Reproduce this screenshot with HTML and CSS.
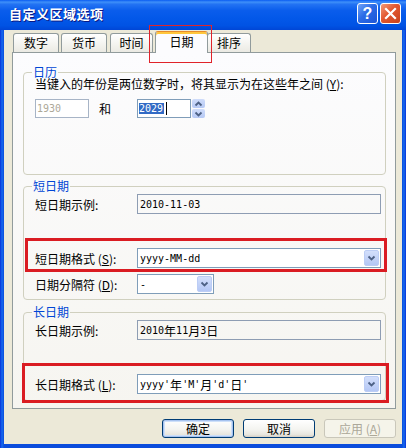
FILE: index.html
```html
<!DOCTYPE html>
<html lang="zh-CN">
<head>
<meta charset="utf-8">
<title>自定义区域选项</title>
<link rel="stylesheet" href="styles.css">
</head>
<body>
<div class="window">
  <div class="titlebar">
    <span class="title">自定义区域选项</span>
    <div class="caption">
      <span class="cbtn help">?</span>
      <span class="cbtn close"><svg width="13" height="13" viewBox="0 0 13 13"><path d="M2 2 L11 11 M11 2 L2 11" stroke="#fff" stroke-width="2.2" stroke-linecap="square"/></svg></span>
    </div>
  </div>
  <div class="client">
    <div class="tabs">
      <div class="tab t1">数字</div>
      <div class="tab t2">货币</div>
      <div class="tab t3">时间</div>
      <div class="tab selected">日期</div>
      <div class="tab t5">排序</div>
    </div>
    <div class="panel">
      <fieldset class="group g-cal">
        <legend>日历</legend>
        <div class="hint">当键入的年份是两位数字时，将其显示为在这些年之间 (<u>Y</u>):</div>
        <div class="year-row">
          <span class="edit year disabled mono">1930</span>
          <span class="and">和</span>
          <span class="edit year mono"><span class="sel">2029</span><span class="caret"></span></span>
          <span class="spin">
            <span class="spin-part"><svg width="9" height="6" viewBox="0 0 9 6"><path d="M1.5 4.5 L4.5 1.5 L7.5 4.5" fill="none" stroke="#4D6185" stroke-width="1.8"/></svg></span>
            <span class="spin-part"><svg width="9" height="6" viewBox="0 0 9 6"><path d="M1.5 1.5 L4.5 4.5 L7.5 1.5" fill="none" stroke="#4D6185" stroke-width="1.8"/></svg></span>
          </span>
        </div>
      </fieldset>

      <fieldset class="group g-short">
        <legend>短日期</legend>
        <div class="field first">
          <span class="label">短日期示例:</span>
          <span class="edit readonly mono">2010-11-03</span>
        </div>
        <div class="field second">
          <span class="label">短日期格式 (<u>S</u>):</span>
          <span class="combo"><span class="value mono">yyyy-MM-dd</span><span class="drop"><svg width="9" height="6" viewBox="0 0 9 6"><path d="M1.5 1.5 L4.5 4.5 L7.5 1.5" fill="none" stroke="#4D6185" stroke-width="1.8"/></svg></span></span>
        </div>
        <div class="field third">
          <span class="label">日期分隔符 (<u>D</u>):</span>
          <span class="combo small"><span class="value mono">-</span><span class="drop"><svg width="9" height="6" viewBox="0 0 9 6"><path d="M1.5 1.5 L4.5 4.5 L7.5 1.5" fill="none" stroke="#4D6185" stroke-width="1.8"/></svg></span></span>
        </div>
      </fieldset>

      <fieldset class="group g-long">
        <legend>长日期</legend>
        <div class="field first">
          <span class="label">长日期示例:</span>
          <span class="edit readonly mono">2010<span class="cjk">年</span>11<span class="cjk">月</span>3<span class="cjk">日</span></span>
        </div>
        <div class="field second">
          <span class="label">长日期格式 (<u>L</u>):</span>
          <span class="combo"><span class="value mono">yyyy'<span class="cjk">年</span>'M'<span class="cjk">月</span>'d'<span class="cjk">日</span>'</span><span class="drop"><svg width="9" height="6" viewBox="0 0 9 6"><path d="M1.5 1.5 L4.5 4.5 L7.5 1.5" fill="none" stroke="#4D6185" stroke-width="1.8"/></svg></span></span>
        </div>
      </fieldset>
    </div>
    <div class="buttons">
      <span class="btn default">确定</span>
      <span class="btn">取消</span>
      <span class="btn disabled">应用 (<u>A</u>)</span>
    </div>
  </div>
  <div class="redbox rb-tab"></div>
  <div class="redbox rb-short"></div>
  <div class="redbox rb-long"></div>
</div>
</body>
</html>
```

FILE: styles.css
```css
* { box-sizing: border-box; }
html, body { margin: 0; padding: 0; }
body {
  width: 406px;
  height: 448px;
  overflow: hidden;
  font-family: "Noto Sans CJK SC", "Noto Sans", sans-serif;
  font-size: 12px;
  color: #000;
  background: #ECE9D8;
}
.window {
  position: relative;
  width: 406px;
  height: 448px;
  display: flex;
  flex-direction: column;
  background: linear-gradient(to right, #0831D9 0, #166AEE 2px, #0A4CDC 4px, #0A4CDC 402px, #166AEE 404px, #0831D9 406px);
}
.titlebar {
  height: 30px;
  display: flex;
  align-items: flex-start;
  justify-content: space-between;
  padding: 0 5px 0 9px;
  background: linear-gradient(#0A5CF2 0%, #3F90F9 7%, #2373F3 14%, #0A5DEC 35%, #0358E9 60%, #0053E4 85%, #0046D6 100%);
}
.title {
  color: #fff;
  font-weight: bold;
  font-size: 13px;
  line-height: 16px;
  margin-top: 6px;
  letter-spacing: 0.5px;
  text-shadow: 1px 1px 0 #0A1883;
}
.caption {
  display: flex;
  gap: 2px;
  margin-top: 3px;
}
.cbtn {
  width: 21px;
  height: 21px;
  border: 1px solid #fff;
  border-radius: 3px;
  display: flex;
  align-items: center;
  justify-content: center;
}
.help {
  background: linear-gradient(135deg, #6FA3F8 0%, #2B6BE6 45%, #1D55D6 100%);
  color: #fff;
  font-family: "Liberation Sans", sans-serif;
  font-weight: bold;
  font-size: 16px;
  line-height: 1;
}
.close {
  background: linear-gradient(135deg, #F19A7A 0%, #E2572F 45%, #C8411C 100%);
}
.client {
  flex: 1;
  margin: 0 4px 4px;
  background: #ECE9D8;
  padding: 0 6px 0 8px;
  display: flex;
  flex-direction: column;
}
.tabs {
  height: 22px;
  display: flex;
  align-items: flex-end;
}
.tab {
  height: 19px;
  border: 1px solid #919B9C;
  border-bottom: none;
  border-radius: 3px 3px 0 0;
  background: linear-gradient(#FFFFFF, #F7F7F4 40%, #EBEAE3 100%);
  padding-top: 1px;
  line-height: 16px;
  text-align: center;
  white-space: nowrap;
}
.t1 { width: 46px; margin-left: 1px; }
.t2 { width: 46px; margin-left: 2px; }
.t3 { width: 43px; margin-left: 3px; }
.t5 { width: 44px; margin-left: -1px; }
.tab.selected {
  position: relative;
  z-index: 1;
  width: 53px;
  height: 22px;
  margin-left: 2px;
  margin-bottom: -1px;
  background: #FCFCFE;
  border-top: 1px solid #E68B2C;
  box-shadow: inset 0 2px 0 #FFC73C;
  padding-top: 2px;
}
.panel {
  height: 357px;
  border: 1px solid #919B9C;
  background: linear-gradient(#FCFCFE, #F6F5F0);
  display: flex;
  flex-direction: column;
}
.group {
  margin: 0 9px 0 10px;
  border: 1px solid #D0D0BF;
  border-radius: 4px;
  padding: 0 4px 0 11px;
  min-width: 0;
}
.group legend {
  color: #0046D5;
  line-height: 12px;
  padding: 0 1px;
  margin-left: -3px;
}
.g-cal { margin-top: 13px; padding-bottom: 56px; }
.g-short { margin-top: 5px; padding-bottom: 5px; }
.g-long { margin-top: 6px; padding-bottom: 6px; }
.hint {
  line-height: 12px;
  white-space: nowrap;
}
.year-row {
  margin-top: 9px;
  height: 19px;
  display: flex;
  align-items: center;
}
.mono {
  font-family: "DejaVu Sans Mono", "Liberation Mono", monospace;
  font-size: 10px;
}
.cjk {
  font-family: "Noto Sans CJK SC", sans-serif;
  font-size: 12px;
}
.edit {
  height: 20px;
  border: 1px solid #7F9DB9;
  background: #fff;
  display: flex;
  align-items: center;
  padding: 0 2px;
  white-space: nowrap;
}
.edit.year {
  width: 54px;
  height: 19px;
  padding: 0 1px;
}
.edit.disabled {
  border-color: #A7B4C6;
  color: #ACA899;
}
.edit.readonly {
  background: transparent;
  border-color: #8E9DB3;
}
.and {
  margin: 0 26px 0 10px;
}
.sel {
  background: #316AC5;
  color: #fff;
  line-height: 11px;
  padding: 0 1px 0 0;
}
.caret {
  width: 1px;
  height: 13px;
  background: #000;
  margin-left: 2px;
}
.spin {
  width: 13px;
  height: 19px;
  margin-left: 1px;
  display: flex;
  flex-direction: column;
  gap: 1px;
}
.spin-part {
  flex: 1;
  border-radius: 2px;
  background: linear-gradient(#CFDCFA, #B6C9F5);
  display: flex;
  align-items: center;
  justify-content: center;
}
.field {
  display: grid;
  grid-template-columns: 102px 1fr;
  align-items: center;
}
.field.first { margin-top: 2px; }
.g-short .field.second { margin-top: 34px; }
.g-short .field.third { margin-top: 6px; }
.g-long .field.second { margin-top: 34px; }
.label { white-space: nowrap; }
.combo {
  height: 20px;
  border: 1px solid #7F9DB9;
  background: #fff;
  padding: 1px;
  display: flex;
  align-items: stretch;
}
.combo.small {
  width: 77px;
  justify-self: start;
}
.combo .value {
  flex: 1;
  display: flex;
  align-items: center;
  padding-left: 1px;
  white-space: nowrap;
}
.drop {
  width: 15px;
  border: 1px solid #BCCDF5;
  border-radius: 2px;
  background: linear-gradient(#D3DFFB, #B4C7F5);
  display: flex;
  align-items: center;
  justify-content: center;
}
.buttons {
  margin-top: 10px;
  display: flex;
  justify-content: flex-end;
  gap: 9px;
}
.btn {
  width: 72px;
  height: 19px;
  border: 1px solid #003C74;
  border-radius: 3px;
  background: linear-gradient(#FFFFFF, #F4F4F0 55%, #E8E6DF 85%, #D6D0C5);
  display: flex;
  align-items: center;
  justify-content: center;
  line-height: 1;
}
.btn.default {
  box-shadow: inset 0 0 0 1px #A7C3EF, inset 0 0 0 2px #CEE0F9;
}
.btn.disabled {
  border-color: #C9C7BA;
  color: #ACA899;
  background: #F5F4EA;
}
.redbox {
  position: absolute;
  pointer-events: none;
}
.rb-tab {
  left: 149px;
  top: 25px;
  width: 63px;
  height: 38px;
  border: 1px solid #E0242A;
}
.rb-short {
  left: 25px;
  top: 238px;
  width: 362px;
  height: 34px;
  border: 3px solid #DA1C22;
}
.rb-long {
  left: 22px;
  top: 363px;
  width: 367px;
  height: 40px;
  border: 3px solid #DA1C22;
}
```
